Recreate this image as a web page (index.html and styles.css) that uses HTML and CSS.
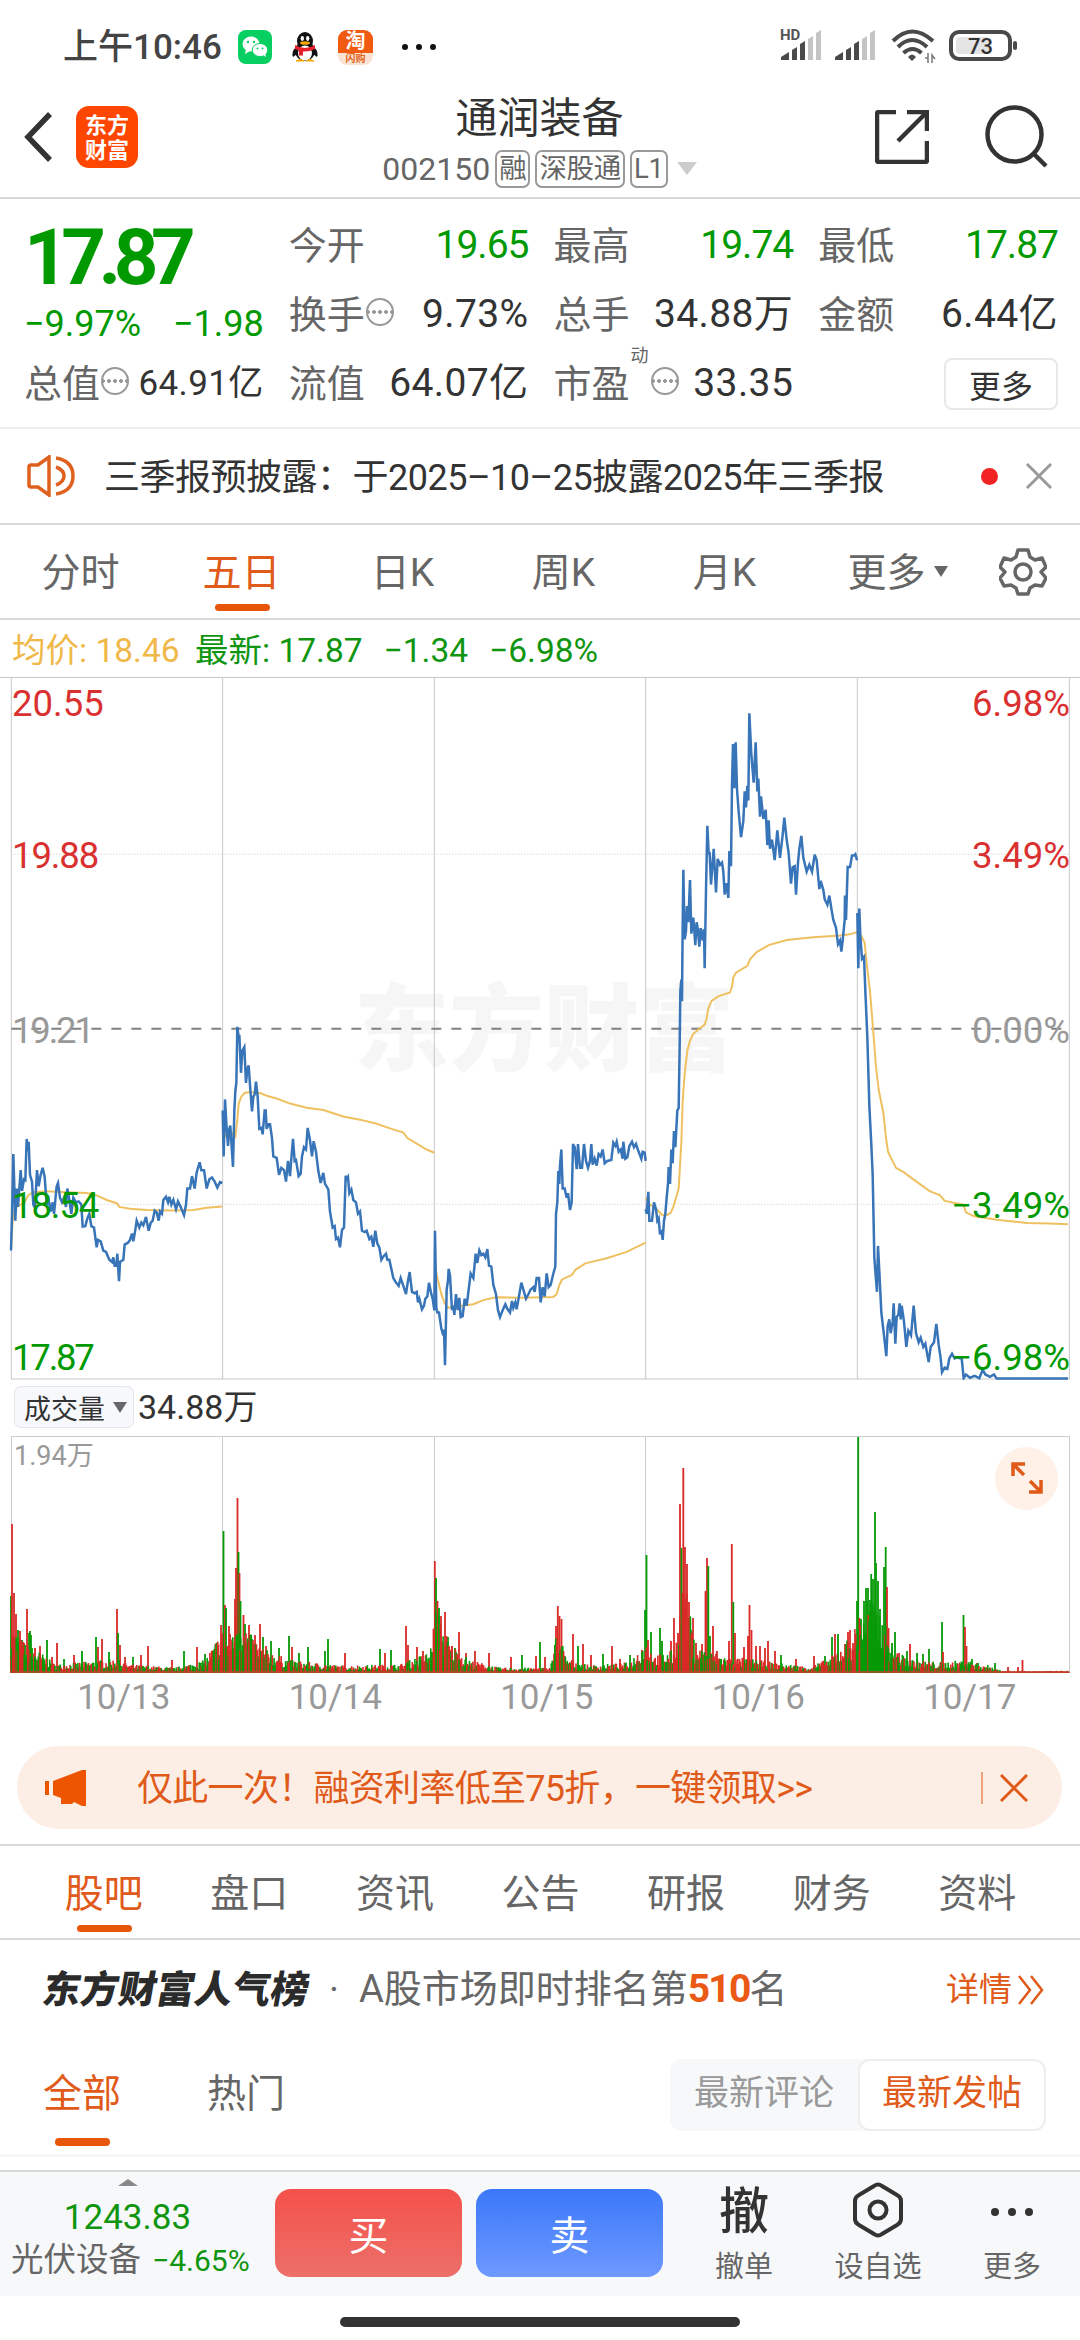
FILE: index.html
```html
<!DOCTYPE html>
<html lang="zh-CN">
<head>
  <meta charset="UTF-8">
  <meta name="viewport" content="width=device-width, initial-scale=1.0">
  <title>通润装备 002150</title>
  <link rel="stylesheet" href="styles.css">
</head>
<body>
  <div class="status-bar">
    <span class="time">上午10:46</span>
    <svg class="app-icon" viewBox="0 0 34 34">
      <rect width="34" height="34" rx="8" fill="#07cf62"/>
      <ellipse cx="13" cy="14" rx="8.500" ry="7.500" fill="#fff"/>
      <path d="M8 19l-1 5 5-3z" fill="#fff"/>
      <ellipse cx="22" cy="20" rx="7.700" ry="6.600" fill="#fff" stroke="#07cf62"/>
      <path d="M25 25l3 2-1-4z" fill="#fff"/>
      <g fill="#07cf62"><circle cx="10" cy="12" r="1.200"/><circle cx="16" cy="12" r="1.200"/><circle cx="19.500" cy="18.500" r="1"/><circle cx="24.500" cy="18.500" r="1"/></g>
    </svg>
    <svg class="app-icon" viewBox="0 0 34 34">
      <path d="M8 17q-5 5-3 10l4-3M26 17q5 5 3 10l-4-3" fill="#111"/>
      <ellipse cx="17" cy="21" rx="10" ry="10" fill="#111"/>
      <ellipse cx="17" cy="11" rx="8" ry="9" fill="#111"/>
      <ellipse cx="17" cy="23" rx="7" ry="7.500" fill="#fff"/>
      <path d="M8 31q4-3 8 0zM18 31q4-3 8 0z" fill="#f6a800" stroke="#f6a800"/>
      <ellipse cx="14.300" cy="8.500" rx="1.700" ry="2.400" fill="#fff"/><ellipse cx="19.700" cy="8.500" rx="1.700" ry="2.400" fill="#fff"/>
      <ellipse cx="17" cy="13" rx="5" ry="1.800" fill="#f6a800"/>
      <path d="M7 15q10 6 20 0v4q-6 3-12 2.500v4h-4v-5l-4-1.500z" fill="#e5202b"/>
    </svg>
    <span class="tao-icon"><b>淘</b><i>闪购</i></span>
    <span class="dots"><i></i><i></i><i></i></span>
    <svg class="system-icons" viewBox="0 0 240 40">
      <text x="0" y="13" class="hd">HD</text>
      <g fill="#4a4a4a">
        <path d="M1 33v-3l8-5v8zM12 33V23l5-3v13zM20 33V17l5-3v19z"/>
        <path d="M55 33v-3l8-5v8zM66 33V23l5-3v13zM74 33V17l5-3v19z"/>
      </g>
      <g fill="#c4c4c4">
        <path d="M28 33V12l5-3v24zM36 33V6l5-3v30zM82 33V12l5-3v24zM90 33V6l5-3v30z"/>
      </g>
      <g fill="none" stroke="#4a4a4a" stroke-width="4">
        <path d="M113 14q19-19 40 0M118 20q14-14 29 0M123.500 26q9-8 18 0"/>
      </g>
      <path d="M128 30q4-5 8 0l-4 4z" fill="#4a4a4a"/>
      <path d="M148 28v8M145 31h3v-5M152 36v-8l3 4" fill="none" stroke="#777" stroke-width="1.500"/>
      <rect x="171" y="5" width="59" height="27" rx="8" fill="none" stroke="#4a4a4a" stroke-width="4"/>
      <rect x="176" y="10" width="33" height="17" rx="4" fill="#e4e4e4"/>
      <rect x="233" y="14" width="4" height="9" rx="2" fill="#4a4a4a"/>
      <text x="200.500" y="26.500" class="battery">73</text>
    </svg>
  </div>

  <header class="header">
    <svg class="back" viewBox="0 0 30 52"><path d="M26 3L4 26l22 23"/></svg>
    <div class="logo">东方<br>财富</div>
    <div class="stock">
      <h1>通润装备</h1>
      <div class="code">
        <span>002150</span><em>融</em><em>深股通</em><em>L1</em><i class="caret"></i>
      </div>
    </div>
    <svg class="share" viewBox="0 0 54 54"><path d="M21 2H4Q2 2 2 4v46q0 2 2 2h46q2 0 2-2V31M32 2h20v19M52 2L23 31"/></svg>
    <svg class="search" viewBox="0 0 64 64"><circle cx="29.500" cy="29.500" r="27"/><path d="M49 49l12 12"/></svg>
  </header>

  <section class="quote">
    <div class="price">17.87</div>
    <div class="cell"><label>今开</label><b class="down">19.65</b></div>
    <div class="cell"><label>最高</label><b class="down">19.74</b></div>
    <div class="cell"><label>最低</label><b class="down">17.87</b></div>
    <div class="cell change down"><span>−9.97%</span><span>−1.98</span></div>
    <div class="cell"><label>换手</label><i class="info"></i><b>9.73%</b></div>
    <div class="cell"><label>总手</label><b>34.88万</b></div>
    <div class="cell"><label>金额</label><b>6.44亿</b></div>
    <div class="cell small"><label>总值</label><i class="info"></i><b>64.91亿</b></div>
    <div class="cell"><label>流值</label><b>64.07亿</b></div>
    <div class="cell"><label class="dynamic">市盈<sup>动</sup></label><i class="info"></i><b>33.35</b></div>
    <div class="cell"><button class="more-btn">更多</button></div>
  </section>

  <section class="notice">
    <svg class="speaker" viewBox="0 0 48 42"><path d="M2 12q0-2 2-2h7L22 2v38L11 32H4q-2 0-2-2zM29 3q17 3 17 18T29 39M29 12q8 3 8 9t-8 9"/></svg>
    <p>三季报预披露：于2025–10–25披露2025年三季报</p>
    <i class="red-dot"></i>
    <svg class="close" viewBox="0 0 28 28"><path d="M2 2l24 24M26 2L2 26"/></svg>
  </section>

  <nav class="period-tabs">
    <a>分时</a>
    <a class="active">五日</a>
    <a>日K</a>
    <a>周K</a>
    <a>月K</a>
    <a>更多<i class="caret"></i></a>
    <svg viewBox="0 0 48 48"><path d="M19 2h10l2 7 5 3 7-2 4 9-5 5 5 6-4 8-7-1-5 3-2 6H19l-2-6-5-3-7 1-4-8 5-6-5-5 4-9 7 2 5-3z"/><circle cx="24" cy="24" r="8"/></svg>
  </nav>

  <div class="legend">
    <span class="avg">均价: 18.46</span>
    <span class="last">最新: 17.87</span>
    <span class="last">−1.34</span>
    <span class="last">−6.98%</span>
  </div>

  <section class="price-chart">
    <div class="watermark">东方财富</div>
    <svg viewBox="0 16 3240 1531" preserveAspectRatio="none">
      <g class="grid">
        <path d="M0 17H3240M34 17V1545H3208V17M668 17V1545M1303 17V1545M1937 17V1545M2572 17V1545"/>
        <path class="dotted" d="M34 402H3208M34 1164H3208"/>
        <path class="zero" d="M34 782H3208"/>
      </g>
      <g class="avg-line">
        <polyline points="33,1262 38,1200 42,1180 50,1170 74,1160 84,1145 100,1138 140,1136 200,1138 260,1140 290,1145 320,1155 350,1162 358,1170 390,1174 440,1177 520,1178 580,1177 620,1172 667,1169"/>
        <polyline points="672,1020 680,1010 690,1005 700,1012 706,1017 712,980 716,945 724,930 734,922 748,920 780,922 800,928 830,934 870,945 920,954 970,959 1030,973 1080,980 1130,989 1170,999 1210,1008 1222,1020 1250,1032 1280,1045 1303,1052"/>
        <polyline transform="translate(1260 0)" points="45,1300 54,1330 64,1360 74,1380 84,1390 100,1387 130,1385 160,1382 190,1373 228,1367 300,1368 400,1366 410,1360 418,1340 426,1328 456,1318 466,1307 496,1293 560,1282 620,1268 677,1248"/>
        <polyline transform="translate(1920 0)" points="17,1150 30,1165 50,1175 66,1187 80,1188 92,1183 100,1170 108,1150 116,1130 120,1080 124,1030 128,940 134,880 142,830 150,808 160,793 178,782 194,773 200,760 204,740 214,722 236,711 270,703 276,690 280,670 288,660 322,645 330,631 350,615 386,600 440,589 520,583 600,579 625,577 651,572"/>
        <polyline transform="translate(1920 0)" points="652,572 664,580 674,595 680,640 690,700 700,790 708,865 716,915 730,965 738,1020 744,1050 754,1065 768,1085 792,1095 820,1110 868,1135 900,1145 914,1157 970,1165 978,1182 1000,1190 1070,1198 1160,1205 1230,1206 1284,1208"/>
      </g>
      <g class="price-line">
        <polyline points="33,1265 36,1190 40,1055 46,1200 50,1130 54,1170 62,1090 66,1135 72,1110 76,1112 80,1022 84,1048 86,1028 90,1100 96,1115 100,1165 105,1172 111,1090 116,1125 122,1100 128,1085 134,1105 140,1165 146,1155 152,1180 158,1160 162,1185 170,1125 174,1118 180,1150 186,1160 192,1150 198,1170 202,1130 208,1155 214,1185 220,1150 228,1160 236,1158 244,1165 248,1213 256,1212 262,1195 268,1185 274,1212 282,1215 290,1258 294,1242 302,1245 310,1265 318,1268 328,1285 336,1290 340,1280 344,1298 349,1298 352,1272 357,1332 360,1290 370,1285 374,1252 384,1248 390,1242 396,1228 400,1245 406,1220 410,1200 418,1215 424,1204 430,1210 438,1192 446,1222 452,1205 458,1200 464,1178 470,1182 476,1200 480,1180 486,1185 490,1155 498,1148 504,1160 508,1148 514,1165 520,1155 528,1175 534,1158 542,1170 552,1188 558,1165 562,1130 570,1130 576,1103 584,1130 590,1095 599,1073 604,1090 612,1090 620,1130 628,1110 636,1106 644,1115 652,1128 660,1116 667,1118"/>
        <polyline points="668,960 671,1060 675,936 680,1000 684,1037 688,1000 691,993 695,1040 699,1083 703,960 706,918 709,900 712,778 716,800 718,795 723,878 727,830 733,822 738,900 742,870 746,862 750,905 756,962 760,930 764,925 768,897 773,930 778,1000 784,998 788,1012 794,960 797,960 800,1000 806,990 810,990 816,1020 820,1060 830,1063 837,1100 844,1085 852,1090 858,1115 864,1070 870,1103 874,1065 879,1022 884,1070 888,1068 896,1103 902,1098 906,1060 912,1040 918,1045 923,998 930,1025 936,1060 941,1027 948,1050 955,1092 962,1118 970,1096 975,1120 985,1132 990,1180 998,1215 1004,1212 1008,1240 1014,1237 1020,1258 1026,1220 1032,1215 1037,1102 1040,1110 1044,1105 1048,1140 1054,1132 1060,1155 1068,1160 1074,1185 1080,1180 1086,1222 1094,1225 1100,1222 1108,1240 1114,1235 1120,1257 1126,1222 1132,1250 1138,1258 1144,1285 1150,1278 1158,1272 1162,1285 1168,1285 1174,1305 1180,1325 1188,1335 1196,1342 1202,1325 1210,1342 1218,1360 1223,1335 1229,1312 1236,1355 1244,1358 1250,1355 1254,1378 1258,1370 1266,1393 1272,1385 1276,1370 1282,1365 1287,1335 1294,1360 1298,1370 1303,1395"/>
        <polyline transform="translate(1260 0)" points="43,1395 45,1222 49,1390 52,1400 57,1400 64,1435 70,1450 72,1437 75,1515 80,1350 84,1330 86,1305 90,1320 96,1395 100,1385 103,1405 108,1360 113,1395 118,1368 122,1410 128,1408 134,1370 140,1385 146,1350 152,1315 160,1325 167,1272 172,1292 178,1265 184,1275 190,1272 196,1280 202,1262 207,1298 214,1300 220,1340 228,1360 234,1395 240,1410 248,1395 256,1382 262,1392 270,1400 276,1375 280,1390 286,1378 290,1393 298,1360 304,1335 310,1350 318,1370 324,1362 332,1350 340,1345 344,1355 350,1325 357,1325 362,1378 368,1345 374,1365 380,1315 386,1345 392,1340 400,1315 406,1300 408,1185 412,1160 415,1092 418,1120 420,1080 424,1045 428,1130 434,1130 440,1150 444,1140 450,1177 455,1160 459,1033 464,1040 470,1088 474,1033 480,1085 486,1085 492,1033 498,1070 504,1085 510,1070 514,1033 518,1078 524,1065 530,1080 536,1055 542,1060 548,1045 554,1075 562,1070 574,1068 580,1030 586,1037 590,1028 596,1050 602,1045 608,1065 610,1028 616,1065 622,1062 628,1038 636,1028 642,1040 648,1033 656,1050 664,1065 668,1050 674,1052 677,1070"/>
        <polyline transform="translate(1920 0)" points="17,1175 20,1185 25,1137 28,1200 36,1200 42,1160 48,1175 52,1200 56,1195 60,1230 64,1220 68,1242 72,1200 76,1185 80,1150 84,1120 86,1083 90,1120 94,1045 98,1075 102,1005 106,1040 112,960 116,955 119,820 121,700 124,675 126,722 128,560 130,436 134,587 138,570 141,515 145,550 150,458 154,575 160,540 166,600 170,550 174,568 178,603 182,563 188,590 192,565 194,650 198,480 202,340 206,400 209,400 213,468 221,390 228,485 233,412 240,425 246,420 250,440 254,490 260,465 265,497 268,395 273,428 276,250 279,162 283,258 287,158 291,260 296,310 303,365 310,330 314,265 318,300 322,253 325,285 328,95 334,185 341,246 347,158 352,265 355,237 360,320 363,276 370,325 377,305 382,382 386,328 390,390 396,370 404,415 412,350 420,410 428,360 433,322 440,370 446,400 453,466 458,430 464,428 468,490 474,420 478,390 484,362 490,410 500,440 508,425 516,440 524,403 530,415 538,478 542,460 550,480 554,500 562,512 568,492 574,520 580,545 588,562 594,598 600,590 604,614 608,590 614,545 615,492 618,545 623,430 630,430 636,405 642,405 646,402 651,415"/>
        <polyline transform="translate(1920 0)" points="652,530 655,650 658,520 661,580 663,600 666,630 672,625 676,700 682,800 688,950 694,1035 698,1100 703,1280 707,1320 711,1355 714,1255 719,1325 724,1400 732,1450 739,1495 743,1430 748,1415 752,1445 758,1420 761,1380 766,1468 770,1410 775,1405 779,1380 782,1415 785,1385 792,1420 799,1475 805,1440 813,1450 821,1385 828,1445 836,1465 842,1455 850,1475 856,1468 866,1508 872,1475 882,1465 889,1425 896,1470 902,1500 906,1530 914,1520 922,1523 928,1500 936,1490 944,1500 950,1498 965,1500 971,1543 978,1535 990,1542 1004,1538 1018,1543 1028,1525 1036,1535 1050,1540 1062,1535 1070,1544 1284,1544"/>
      </g>
    </svg>
    <div class="axis left">
      <span class="up">20.55</span><span class="up narrow">19.88</span><span class="narrower">19.21</span><span class="down narrow">18.54</span><span class="down narrower">17.87</span>
    </div>
    <div class="axis right">
      <span class="up">6.98%</span><span class="up">3.49%</span><span>0.00%</span><span class="down">−3.49%</span><span class="down">−6.98%</span>
    </div>
  </section>

  <div class="volume-head">
    <button>成交量<i class="caret"></i></button>
    <span>34.88万</span>
  </div>
  <section class="volume-chart">
    <svg viewBox="0 0 1080 238">
      <path class="frame" d="M11.500 237V.5H1069.500V237M222.500 0V237M434.500 0V237M645.500 0V237M857.500 0V237"/>
      <g id="bars"></g>
      <path d="M11 236H1069" stroke="#b8442a" stroke-width="1.500"/>
    </svg>
    <span class="vol-max">1.94万</span>
    <button class="expand">
      <svg viewBox="0 0 32 32"><path d="M2 14V2h12M2 2l11 11M30 18v12H18M30 30L19 19"/></svg>
    </button>
  </section>
  <div class="dates">
    <span>10/13</span><span>10/14</span><span>10/15</span><span>10/16</span><span>10/17</span>
  </div>

  <div class="promo">
    <svg class="horn" viewBox="0 0 42 38"><path d="M0 12h4v14H0zM8 12L37 1h4v36h-4l-8-4-2 2H16v-6l-8-3z"/></svg>
    <p>仅此一次！融资利率低至75折，一键领取&gt;&gt;</p>
    <i class="bar"></i>
    <svg class="close" viewBox="0 0 28 28"><path d="M1 1l26 26M27 1L1 27"/></svg>
  </div>

  <nav class="main-tabs">
    <a class="active">股吧</a>
    <a>盘口</a>
    <a>资讯</a>
    <a>公告</a>
    <a>研报</a>
    <a>财务</a>
    <a>资料</a>
  </nav>

  <section class="rank">
    <h2>东方财富人气榜</h2>
    <i class="mid">·</i>
    <p>A股市场即时排名第<b>510</b>名</p>
    <a>详情<svg viewBox="0 0 28 30"><path d="M2 1l11 14L2 29M14 1l11 14-11 14"/></svg></a>
  </section>

  <section class="filter">
    <a class="active">全部</a>
    <a>热门</a>
    <div class="segment"><span>最新评论</span><span class="on">最新发帖</span></div>
  </section>

  <footer class="bottom-bar">
    <div class="index">
      <i class="caret-up"></i>
      <b>1243.83</b>
      <p>光伏设备 <span>−4.65%</span></p>
    </div>
    <button class="buy">买</button>
    <button class="sell">卖</button>
    <div class="tool"><strong>撤</strong><span>撤单</span></div>
    <div class="tool">
      <svg viewBox="0 0 50 56"><path d="M21 4q4-3 8 0l15 9q4 2 4 6v18q0 4-4 6l-15 9q-4 3-8 0L6 43q-4-2-4-6V19q0-4 4-6z"/><circle cx="25" cy="28" r="8.500"/></svg>
      <span>设自选</span>
    </div>
    <div class="tool"><div class="dots"><i></i><i></i><i></i></div><span>更多</span></div>
  </footer>
  <div class="home-indicator"></div>

  <script>
    // Peak volume bars: x, height, colour (r = up, g = down)
    const peaks = "11,77,g 12,149,r 14,80,r 16,59,r 18,43,g 20,42,r 22,33,g 24,30,r 27,64,r 29,40,g 30,42,g 31,38,g 35,25,r 40,27,r 47,33,g 52,16,r 57,30,r 64,14,g 74,18,r 82,22,g 96,36,g 98,26,r 102,34,r 109,21,g 117,64,r 118,40,g 120,28,r 125,16,r 133,16,g 141,18,r 148,27,r 172,13,r 184,22,g 197,26,r 205,19,g 213,19,r 218,28,r 221,48,r " +
      "223.5,142,g 225,68,r 226,65,g 229,47,r 235,74,r 236,105,r 237.5,175,r 238.5,121,g 239.5,100,r 240.5,72,g 243.5,58,r 245,49,g 249,48,r 252,34,g 255,38,r 260,49,r 263,36,g 266,27,r 271,32,g 279,25,g 289,37,g 292,26,r 299,20,g 308,26,g 325,22,g 328,34,g 345,20,r 380,24,g 385,20,r 391,23,g 406,47,r 408,28,r 417,26,r 423,22,r 432,21,g 434,42,g " +
      "434.8,112,r 436,95,g 437.5,72,r 439,65,g 441,57,r 445,61,r 448,36,g 452,27,r 455,25,g 459,41,r 466,20,r 475,22,r 489,20,r 511,16,r 522,18,g 536,17,r 540,31,g 545,16,r 556,47,r 557.8,67,r 559.5,57,r 561.5,54,r 573,39,r 578,27,g 583,29,r 591,18,r 603,19,g 612,27,r 620,14,r 630,18,g 642,23,r " +
      "645,63,g 646.5,118,g 648,33,r 651,41,g 660,45,g 662,32,g 671,32,r 674,55,r 678,40,r 680,169,r 681.5,125,g 683.3,205,r 685,126,r 687,109,r 689,71,r 691,43,g 693,55,r 696,30,r 702,29,r 705.5,82,r 707,115,r 708.3,107,g 710,37,g 713,47,r 717,22,r 729,32,r 731.8,129,r 733.3,71,g 735,40,r 744,26,r 748,37,r 749.5,68,r 751.5,43,r 756,27,r 760,27,r 765,25,r 768,32,r 775,22,r 781,18,g 796,14,r 814,17,r 825,17,g 832,36,g 835,39,r 838,39,g 845,29,r 848,41,r 850,43,r 853,30,r " +
      "857,72,g 858.2,236,g 859.5,55,r 861,54,g 864,72,g 866,85,g 868,85,g 870,73,g 871.2,99,g 873,94,g 875,161,g 876,110,g 878,92,g 880,64,g 884,106,g 885.7,126,g 887,86,r 888.5,45,r 892,30,g 895,41,g 899,20,r 907,22,g 910,29,r 917,20,g 923,19,g 929,24,g 942,51,g 943,21,r 963.5,58,g 965,46,r 966.5,27,r 972,14,g 977,10,r 995,10,g 1008,6,r 1018,6,r 1022.5,13,r";

    // Ordinary minutes: x and the usual level of trading around it
    const levels = [[11, 44], [20, 32], [45, 16], [55, 8], [115, 13], [130, 8], [175, 5], [205, 12], [222, 40],
      [228, 30], [237, 60], [250, 36], [265, 22], [290, 12], [340, 7], [400, 8], [430, 20], [436, 60], [450, 28],
      [470, 12], [500, 5], [550, 5], [558, 45], [566, 14], [590, 7], [630, 10], [645, 30], [655, 16], [675, 22],
      [684, 90], [695, 25], [730, 14], [745, 14], [780, 9], [810, 6], [830, 14], [852, 36], [862, 55], [868, 74],
      [884, 50], [892, 22], [910, 13], [940, 10], [965, 12], [990, 7], [1002, 2], [1069, 2]];
    const colors = { r: "#d92a26", g: "#079a07" };
    const bars = document.getElementById("bars");

    let seed = 7;
    function random() {
      seed = (seed * 16807) % 2147483647;
      return seed / 2147483647;
    }

    function levelAt(x) {
      const i = levels.findIndex(l => l[0] > x);
      if (i < 1) return 2;
      const [x0, y0] = levels[i - 1];
      const [x1, y1] = levels[i];
      return y0 + (y1 - y0) * (x - x0) / (x1 - x0);
    }

    function bar(x, h, c, w) {
      return `<rect x="${(x - w / 2).toFixed(1)}" y="${(237 - h).toFixed(1)}" width="${w}" height="${h.toFixed(1)}" fill="${colors[c]}"/>`;
    }

    let html = "";
    peaks.trim().split(/\s+/).forEach(p => {
      const [x, h, c] = p.split(",");
      html += bar(+x, +h, c, 1.8);
    });
    for (let x = 11; x < 1069; x += 0.88) {
      const h = levelAt(x) * (0.35 + random() * 0.75);
      const green = x > 861 && x < 884 ? 0.95 : x > 674 && x < 690 ? 0.25 : 0.48;
      html += bar(x, h, x < 1002 && random() < green ? "g" : "r", 1.6);
    }
    bars.innerHTML = html;
  </script>
</body>
</html>
```
FILE: styles.css
```css
* {
  box-sizing: border-box;
}

body {
  margin: 0;
  width: 1080px;
  height: 2340px;
  overflow: hidden;
  background: #fff;
  color: #333;
  font-family: Roboto, "Noto Sans CJK SC", sans-serif;
  font-size: 38px;
  line-height: 1;
}

h1, h2, p {
  margin: 0;
  font-weight: 400;
}

b, i, em {
  font-weight: 400;
  font-style: normal;
}

button {
  border: none;
  padding: 0;
  font-family: inherit;
}

.up { color: #d93030; }
.down { color: #009900; }

.caret {
  display: inline-block;
  border: 7px solid transparent;
  border-top: 11px solid #666;
  border-bottom: none;
}

.dots {
  display: flex;
}

.dots i {
  border-radius: 50%;
}

/* Status bar */
.status-bar {
  display: flex;
  align-items: center;
  height: 92px;
  padding: 2px 0 0 63px;
}

.time {
  width: 175px;
  font-size: 35px;
  font-weight: 500;
  color: #444;
  white-space: nowrap;
}

.app-icon {
  width: 34px;
  height: 34px;
  margin-right: 16px;
}

.tao-icon {
  display: flex;
  flex-direction: column;
  align-items: center;
  width: 35px;
  height: 35px;
  border-radius: 9px;
  background: linear-gradient(#f25a12 0 66%, #fbe3d3 66%);
}

.tao-icon b {
  height: 23px;
  font-size: 20px;
  font-weight: 700;
  line-height: 23px;
  color: #fff;
}

.tao-icon i {
  font-size: 10px;
  font-weight: 700;
  line-height: 11px;
  color: #e0641a;
}

.status-bar .dots {
  gap: 8px;
  margin: 0 auto 0 29px;
}

.status-bar .dots i {
  width: 6px;
  height: 6px;
  background: #111;
}

.system-icons {
  width: 240px;
  height: 40px;
  margin: 0 60px 0 0;
}

.hd {
  font-size: 15px;
  font-weight: 700;
  fill: #555;
}

.battery {
  font-size: 22px;
  font-weight: 500;
  text-anchor: middle;
  fill: #333;
}

/* Header */
.header {
  display: flex;
  align-items: center;
  height: 107px;
  padding: 0 31px 16px 24px;
  border-bottom: 2px solid #d8d8d8;
}

.header svg {
  fill: none;
  stroke: #333;
  stroke-width: 4.5;
}

.header .back {
  width: 30px;
  height: 52px;
  stroke-width: 5.5;
}

.logo {
  width: 62px;
  height: 62px;
  margin-left: 22px;
  padding-top: 7px;
  border-radius: 13px;
  background: #ff4600;
  color: #fff;
  font-size: 22px;
  font-weight: 700;
  line-height: 25px;
  text-align: center;
}

.stock {
  width: 804px;
  margin: 0 -66px 0 0;
  text-align: center;
  flex: 1;
}

.stock h1 {
  margin-top: 10px;
  font-size: 42px;
  line-height: 46px;
}

.code {
  display: flex;
  justify-content: center;
  align-items: center;
  gap: 5px;
  margin-top: 8px;
  font-size: 32px;
  color: #666;
}

.code em {
  height: 38px;
  padding: 0 2px;
  border: 2px solid #999;
  border-radius: 7px;
  font-size: 27.500px;
  letter-spacing: -.3px;
  line-height: 33px;
}

.code .caret {
  margin-left: 4px;
  border-width: 13px 10px 0;
  border-top-color: #ccc;
}

.share {
  width: 54px;
  height: 54px;
  margin-right: 56px;
}

.search {
  width: 64px;
  height: 64px;
}

/* Quote */
.quote {
  display: grid;
  grid-template-columns: repeat(4, 1fr);
  grid-template-rows: repeat(3, 69px);
  column-gap: 25px;
  height: 230px;
  padding: 12px 22px 0 24px;
  border-bottom: 2px solid #eee;
}

.price {
  padding-top: 8px;
  color: #009900;
  font-size: 78px;
  font-weight: 700;
  letter-spacing: -7.500px;
}

.cell {
  display: flex;
  align-items: center;
  justify-content: space-between;
  white-space: nowrap;
}

.cell label {
  position: relative;
  color: #666;
}

.cell b {
  font-size: 39px;
  letter-spacing: .4px;
}

.cell .down {
  letter-spacing: -1px;
}

.cell sup {
  position: absolute;
  left: 77px;
  top: -18px;
  font-size: 18px;
}

.cell .dynamic {
  margin-right: 20px;
}

.change {
  padding-top: 18px;
  font-size: 36px;
}

.cell.small b {
  font-size: 35px;
}

.info {
  width: 28px;
  height: 28px;
  margin: 0 auto 6px 1px;
  border: 2px solid #999;
  border-radius: 50%;
  background: radial-gradient(circle, #999 1.6px, transparent 2.2px) 0 50% / 6px 24px;
  background-position: 3px 50%;
}

.more-btn {
  width: 114px;
  height: 52px;
  margin-left: auto;
  border: 2px solid #e8e8e8;
  border-radius: 8px;
  background: #fff;
  color: #333;
  font-size: 32px;
}

/* Notice */
.notice {
  display: flex;
  align-items: center;
  height: 96px;
  padding: 0 27px 0 27px;
  border-bottom: 2px solid #d8d8d8;
}

.notice p {
  margin: 3px 0 0 29px;
  font-size: 36px;
  letter-spacing: -.5px;
}

.speaker {
  width: 48px;
  height: 42px;
  fill: none;
  stroke: #e0611f;
  stroke-width: 3.5;
}

.red-dot {
  width: 17px;
  height: 17px;
  margin: 0 27px 0 auto;
  border-radius: 50%;
  background: #f22323;
}

.close {
  width: 28px;
  height: 28px;
  stroke: #999;
  stroke-width: 3;
}

/* Period tabs */
.period-tabs {
  display: grid;
  grid-template-columns: repeat(5, 161px) 185px 66px;
  align-items: center;
  height: 95px;
  padding-top: 3px;
  border-bottom: 2px solid #d8d8d8;
  font-size: 39px;
  color: #666;
  text-align: center;
}

.period-tabs a,
.main-tabs a,
.filter a {
  position: relative;
}

.period-tabs .caret {
  margin: 0 0 9px 8px;
}

.period-tabs svg {
  width: 48px;
  height: 48px;
  margin: 0 9px 3px;
  fill: none;
  stroke: #666;
  stroke-width: 3.5;
  stroke-linejoin: round;
}

.active {
  color: #e05a1a;
}

.active::after {
  content: "";
  position: absolute;
  left: 50%;
  bottom: -18px;
  width: 55px;
  height: 7px;
  margin-left: -27px;
  border-radius: 4px;
  background: #e8560a;
}

/* Legend */
.legend {
  display: flex;
  align-items: center;
  height: 57px;
  padding: 4px 0 0 12px;
  font-size: 33.500px;
  white-space: pre;
}

.avg {
  width: 183px;
  color: #f0b848;
}

.last {
  margin-right: 21px;
  color: #109510;
}

/* Price chart */
.price-chart {
  position: relative;
  height: 703px;
}

.price-chart svg {
  display: block;
  position: relative;
  width: 1080px;
  height: 703px;
}

.price-chart path,
.price-chart polyline {
  fill: none;
  vector-effect: non-scaling-stroke;
}

.grid path {
  stroke: #c8c8c8;
  stroke-width: 1;
}

.grid .dotted {
  stroke-dasharray: 1 2;
}

.grid .zero {
  stroke: #808080;
  stroke-width: 1.8;
  stroke-dasharray: 10 10;
}

.avg-line {
  stroke: #efc060;
  stroke-width: 2;
}

.price-line {
  stroke: #3874b8;
  stroke-width: 2.5;
}

.watermark {
  position: absolute;
  top: 307px;
  left: 354px;
  color: #f6f6f6;
  font-size: 95px;
  font-weight: 900;
}

.axis {
  position: absolute;
  top: 7px;
  bottom: 2px;
  display: grid;
  grid-template-rows: 152px 175px 175px 152px 40px;
  line-height: 40px;
  font-size: 36.500px;
  color: #999;
}

.left { left: 12px; }

.right {
  right: 10px;
  text-align: right;
}

.narrow {
  letter-spacing: -1.1px;
}

.narrower {
  letter-spacing: -2.2px;
}

/* Volume */
.volume-head {
  display: flex;
  align-items: center;
  height: 56px;
  padding: 0 0 2px 14px;
  font-size: 34px;
}

.volume-head button {
  display: flex;
  align-items: center;
  width: 120px;
  height: 42px;
  margin-right: 4px;
  padding-left: 9px;
  border: 1px solid #e4e5ea;
  border-radius: 7px;
  background: #f7f8fb;
  color: #333;
  font-size: 27px;
  white-space: nowrap;
}

.volume-head .caret {
  margin-left: 8px;
}

.volume-chart {
  position: relative;
  height: 237px;
}

.volume-chart > svg {
  display: block;
  width: 1080px;
  height: 238px;
}

.frame {
  fill: none;
  stroke: #ccc;
}

.vol-max {
  position: absolute;
  left: 14px;
  top: 7px;
  font-size: 27px;
  color: #999;
}

.expand {
  position: absolute;
  right: 22px;
  top: 11px;
  width: 63px;
  height: 63px;
  border-radius: 50%;
  background: #fff0e8;
}

.expand svg {
  width: 32px;
  height: 32px;
  margin-top: 2px;
  fill: none;
  stroke: #e05a1a;
  stroke-width: 3.5;
}

.dates {
  display: grid;
  grid-template-columns: repeat(5, 211.500px);
  height: 73px;
  padding: 7px 0 0 18px;
  color: #999;
  font-size: 35px;
  text-align: center;
}

/* Promo */
.promo {
  display: flex;
  align-items: center;
  height: 83px;
  margin: 0 18px 15px 17px;
  padding: 0 34px 0 28px;
  border-radius: 42px;
  background: #fdeee5;
  color: #e05a1a;
}

.horn {
  width: 42px;
  height: 38px;
  fill: #ed5500;
}

.promo p {
  margin: 3px 0 0 50px;
  font-size: 36px;
  letter-spacing: -.7px;
  white-space: nowrap;
}

.bar {
  width: 2px;
  height: 32px;
  margin: 0 17px 0 auto;
  background: #eda27d;
}

.promo .close {
  stroke: #e05a1a;
}

/* Main tabs */
.main-tabs {
  display: grid;
  grid-template-columns: repeat(7, 1fr);
  align-items: center;
  height: 96px;
  padding: 5px 30px 0 31px;
  border-top: 2px solid #d8d8d8;
  border-bottom: 2px solid #d8d8d8;
  font-size: 39px;
  color: #666;
  text-align: center;
}

/* Rank */
.rank {
  display: flex;
  align-items: center;
  height: 101px;
  padding: 0 35px 2px 43px;
  color: #666;
  white-space: nowrap;
}

.rank h2 {
  width: 266px;
  color: #2b2b2b;
  font-size: 38px;
  font-weight: 900;
  transform: skewX(-10deg);
}

.mid {
  width: 50px;
  text-align: center;
}

.rank p b {
  color: #eb5a14;
  font-size: 39px;
  font-weight: 700;
  letter-spacing: -1.800px;
}

.rank a {
  display: flex;
  align-items: center;
  gap: 5px;
  margin-left: auto;
  color: #e05a1a;
  font-size: 33px;
}

.rank svg {
  width: 28px;
  height: 30px;
  fill: none;
  stroke: #e05a1a;
  stroke-width: 2.5;
}

/* Filter */
.filter {
  display: flex;
  align-items: center;
  gap: 86px;
  height: 116px;
  padding: 0 34px 6px 43px;
  border-bottom: 3px solid #f6f7f9;
  font-size: 39px;
  color: #666;
}

.filter .active::after {
  bottom: -32px;
  height: 8px;
}

.segment {
  display: flex;
  height: 72px;
  margin-left: auto;
  border-radius: 12px;
  background: #f7f8fa;
  color: #999;
  font-size: 35px;
  line-height: 70px;
}

.segment span {
  width: 188px;
  text-align: center;
}

.segment .on {
  border: 2px solid #eee;
  border-radius: 12px;
  background: #fff;
  color: #e05a1a;
  line-height: 66px;
}

/* Bottom bar */
.bottom-bar {
  display: flex;
  height: 126px;
  margin-top: 13px;
  border-top: 2px solid #d5dad8;
  background: #f7f8fa;
}

.index {
  display: flex;
  flex-direction: column;
  align-items: center;
  width: 275px;
  padding-right: 20px;
}

.caret-up {
  margin-top: 7px;
  border: 10px solid transparent;
  border-top: none;
  border-bottom: 7px solid #888;
}

.index b {
  margin-top: 14px;
  color: #109510;
  font-size: 35px;
}

.index p {
  width: 244px;
  margin: 9px 0 0 11px;
  font-size: 32.500px;
  color: #666;
  white-space: nowrap;
}

.index p span {
  margin-left: 3px;
  color: #109510;
  font-size: 30px;
}

.buy,
.sell {
  width: 187px;
  height: 88px;
  margin: 17px 14px 0 0;
  border-radius: 16px;
  background: linear-gradient(#f4514a, #ec7069);
  color: #fff;
  font-size: 40px;
}

.sell {
  background: linear-gradient(#3b78f9, #6e99ff);
}

.tool {
  display: flex;
  flex-direction: column;
  align-items: center;
  justify-content: space-between;
  width: 134px;
  height: 110px;
  padding-top: 10px;
}

.tool strong {
  height: 56px;
  color: #333;
  font-size: 50px;
  font-weight: 500;
  line-height: 60px;
}

.tool span {
  color: #666;
  font-size: 29px;
}

.tool svg {
  width: 50px;
  height: 56px;
  fill: none;
  stroke: #333;
  stroke-width: 4;
}

.tool .dots {
  gap: 9px;
  padding-top: 26px;
}

.tool .dots i {
  width: 8px;
  height: 8px;
  background: #333;
}

.home-indicator {
  width: 400px;
  height: 10px;
  margin: 21px auto 0;
  border-radius: 5px;
  background: #333;
}
```
